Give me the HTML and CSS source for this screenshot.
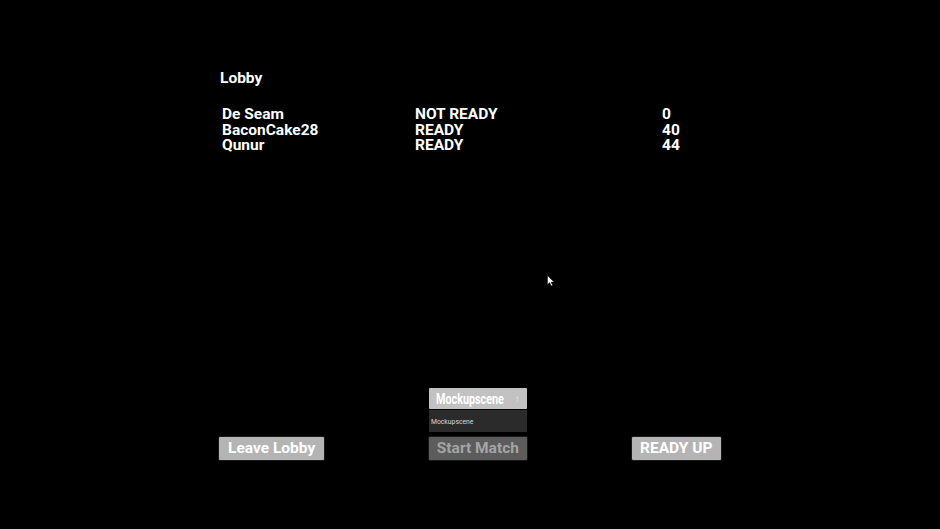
FILE: index.html
```html
<!DOCTYPE html>
<html lang="en">
<head>
<meta charset="utf-8">
<title>Lobby</title>
<link rel="stylesheet" href="styles.css">
</head>
<body>
<main class="lobby">
  <h1 class="lobby-title">Lobby</h1>
  <div class="players">
    <div class="player"><span>De Seam</span><span>NOT READY</span><span>0</span></div>
    <div class="player"><span>BaconCake28</span><span>READY</span><span>40</span></div>
    <div class="player"><span>Qunur</span><span>READY</span><span>44</span></div>
  </div>
  <div class="spacer"></div>
  <div class="actions">
    <button class="btn">Leave Lobby</button>
    <div class="match">
      <div class="select">
        <span class="select-label">Mockupscene</span>
        <span class="select-arrow">&#8593;</span>
      </div>
      <div class="select-list"><span class="select-item">Mockupscene</span></div>
      <button class="btn btn-disabled">Start Match</button>
    </div>
    <button class="btn btn-ready">READY UP</button>
  </div>
</main>
<svg class="cursor" width="8" height="12" viewBox="0 0 8 12">
  <path d="M0.5 0.5 L0.5 9.5 L2.6 7.6 L4.2 11 L5.6 10.3 L4.1 7.1 L7 7 Z" fill="#ffffff" stroke="#222" stroke-width="0.6"/>
</svg>
</body>
</html>
```
FILE: styles.css
```css
html, body {
  margin: 0;
  padding: 0;
  height: 100%;
  background: #000;
}

body {
  font-family: Roboto, "Liberation Sans", sans-serif;
  color: #fff;
  position: relative;
  overflow: hidden;
}

.lobby {
  width: 502px;
  height: 529px;
  margin-left: 219px;
  padding-top: 68px;
  box-sizing: border-box;
  display: flex;
  flex-direction: column;
}

.lobby-title {
  margin: 0 0 0 1px;
  font-size: 15.5px;
  font-weight: 700;
  line-height: 20px;
}

.players {
  margin-top: 19px;
  font-size: 15.5px;
  font-weight: 700;
  line-height: 15.6px;
}

.player {
  display: grid;
  grid-template-columns: 193px 247px 1fr;
  padding-left: 3px;
}

.spacer {
  flex: 1;
}

.actions {
  display: flex;
  justify-content: space-between;
  align-items: flex-end;
  margin-bottom: 69px;
}

.btn {
  height: 23px;
  padding: 0 9px;
  border: none;
  border-radius: 1px;
  background: #b4b4b4;
  color: #fff;
  font-family: Roboto, "Liberation Sans", sans-serif;
  font-size: 15.5px;
  font-weight: 700;
  line-height: 23px;
  box-shadow: 0 0 0 1px #1a1a1a;
}

.btn-ready {
  padding: 0 8.5px;
}

.btn-disabled {
  width: 98px;
  background: #5c5c5c;
  color: #a4a4a4;
  padding: 0;
}

.match {
  display: flex;
  flex-direction: column;
  width: 98px;
}

.select {
  height: 21px;
  background: #c2c2c2;
  border-radius: 1px;
  display: flex;
  align-items: center;
  padding: 0 7px 0 7.5px;
}

.select-label {
  flex: 1;
  width: 0;
  white-space: nowrap;
  font-size: 14px;
  font-weight: 700;
  transform: scaleX(0.77);
  transform-origin: left center;
}

.select-arrow {
  font-size: 10px;
  color: #e4e4e4;
}

.select-list {
  height: 22px;
  margin-top: 1px;
  margin-bottom: 5px;
  background: #2b2b2b;
  display: flex;
  align-items: center;
  padding-left: 2px;
}

.select-item {
  display: inline-block;
  font-size: 8px;
  color: #d8d8d8;
  transform: scaleX(0.85);
  transform-origin: left center;
}

.cursor {
  position: absolute;
  left: 547px;
  top: 275px;
}
```
